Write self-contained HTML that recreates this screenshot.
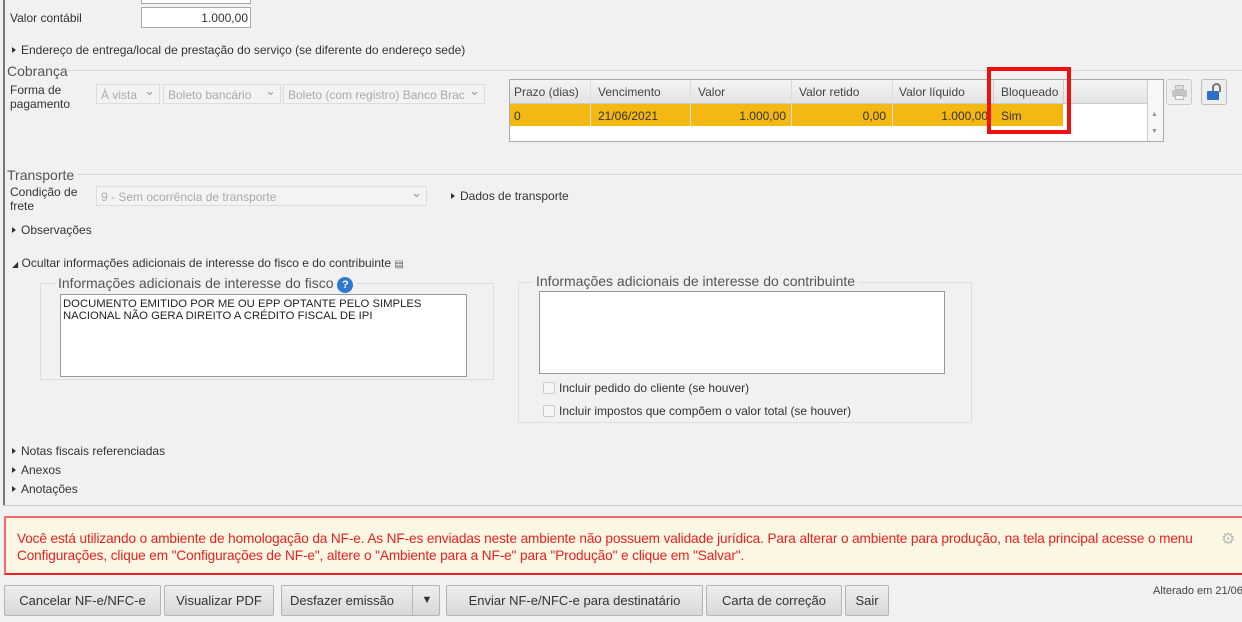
<!DOCTYPE html>
<html><head><meta charset="utf-8"><style>
*{box-sizing:border-box;margin:0;padding:0}
body{width:1242px;height:622px;background:#f1f1f2;font-family:"Liberation Sans",sans-serif;font-size:12px;color:#333;position:relative;overflow:hidden}
.a{position:absolute;white-space:nowrap}
.tri{display:inline-block;width:0;height:0;border-left:4px solid #333;border-top:3.5px solid transparent;border-bottom:3.5px solid transparent;margin-right:5px;vertical-align:1px}
.sel{position:absolute;height:20px;border:1px solid #ddd;background:#f3f3f3;color:#aaa;font-size:12px;padding:3px 4px;overflow:hidden}
.sel:after{content:"⌄";position:absolute;right:4px;top:-2px;font-size:13px;color:#999}
.hl{position:absolute;height:1px;background:#d6d6d6}
.leg{font-size:14px;color:#555}
.btn{position:absolute;top:585px;height:31px;border:1px solid #b5b5b5;border-radius:2px;background:linear-gradient(#eee,#d8d8d8);font-size:13px;color:#333;text-align:center;line-height:29px}
.cb{display:inline-block;width:12px;height:12px;border:1px solid #ccc;border-radius:2px;background:#f5f5f5;vertical-align:-2px;margin-right:4px}
</style></head><body>
<div class="a" style="left:3px;top:0;width:2px;height:506px;background:#777"></div>
<div class="a" style="left:3px;top:505px;width:1239px;height:1px;background:#c8c8c8"></div>
<div class="a" style="left:141px;top:-6px;width:110px;height:10px;border:1px solid #aaa;background:#fff"></div>
<div class="a" style="left:10px;top:11px">Valor contábil</div>
<div class="a" style="left:141px;top:7px;width:110px;height:21px;border:1px solid #aaa;background:#fff;text-align:right;padding:3px 2px;font-size:12px">1.000,00</div>
<div class="a" style="left:12px;top:43px"><span class="tri"></span>Endereço de entrega/local de prestação do serviço (se diferente do endereço sede)</div>
<div class="a leg" style="left:7px;top:63px">Cobrança</div>
<div class="hl" style="left:66px;top:70px;width:1180px"></div>
<div class="a" style="left:10px;top:83px;line-height:14px">Forma de<br>pagamento</div>
<div class="sel" style="left:96px;top:84px;width:64px">À vista</div>
<div class="sel" style="left:163px;top:84px;width:118px">Boleto bancário</div>
<div class="sel" style="left:283px;top:84px;width:202px">Boleto (com registro) Banco Brac</div>
<div class="a" style="left:509px;top:79px;width:655px;height:63px;border:1px solid #aaa;background:#fff"></div>
<div class="a" style="left:510px;top:80px;width:653px;height:24px;background:linear-gradient(#f4f4f4,#e3e3e3);border-bottom:1px solid #ccc"></div>
<div class="a" style="left:1147px;top:80px;width:16px;height:61px;border-left:1px solid #ccc;background:#f7f7f7"></div>
<div class="a" style="left:1151px;top:111px;font-size:7px;color:#999">▲</div>
<div class="a" style="left:1151px;top:128px;font-size:7px;color:#999">▼</div>
<div class="a" style="left:510px;top:104px;width:479px;height:22px;background:#f4b813"></div>
<div class="a" style="left:989px;top:104px;width:74px;height:22px;background:#f4b813"></div>
<div class="a" style="left:590px;top:80px;width:1px;height:46px;background:#ddd"></div>
<div class="a" style="left:690px;top:80px;width:1px;height:46px;background:#ddd"></div>
<div class="a" style="left:791px;top:80px;width:1px;height:46px;background:#ddd"></div>
<div class="a" style="left:892px;top:80px;width:1px;height:46px;background:#ddd"></div>
<div class="a" style="left:993px;top:80px;width:1px;height:24px;background:#ccc"></div>
<div class="a" style="left:1063px;top:80px;width:1px;height:24px;background:#ccc"></div>
<div class="a" style="left:514px;top:85px;font-size:12px;color:#444">Prazo (dias)</div>
<div class="a" style="left:598px;top:85px;font-size:12px;color:#444">Vencimento</div>
<div class="a" style="left:698px;top:85px;font-size:12px;color:#444">Valor</div>
<div class="a" style="left:799px;top:85px;font-size:12px;color:#444">Valor retido</div>
<div class="a" style="left:899px;top:85px;font-size:12px;color:#444">Valor líquido</div>
<div class="a" style="left:1001px;top:85px;font-size:12px;color:#444">Bloqueado</div>
<div class="a" style="left:514px;top:109px;font-size:12px">0</div>
<div class="a" style="left:598px;top:109px;font-size:12px">21/06/2021</div>
<div class="a" style="left:690px;top:109px;width:96px;text-align:right;font-size:12px">1.000,00</div>
<div class="a" style="left:791px;top:109px;width:95px;text-align:right;font-size:12px">0,00</div>
<div class="a" style="left:892px;top:109px;width:96px;text-align:right;font-size:12px">1.000,00</div>
<div class="a" style="left:1001px;top:109px;font-size:12px">Sim</div>
<div class="a" style="left:987px;top:67px;width:84px;height:67px;border:4px solid #f01010"></div>
<div class="a" style="left:1166px;top:79px;width:26px;height:26px;border:1px solid #ccc;border-radius:3px;background:#eee">
<div style="position:absolute;left:8px;top:5px;width:9px;height:5px;background:#ddd;border:1px solid #bbb"></div>
<div style="position:absolute;left:5px;top:10px;width:15px;height:7px;background:#c4c4c4;border-radius:1px"></div>
<div style="position:absolute;left:8px;top:15px;width:9px;height:5px;background:#f4f4f4;border:1px solid #bbb"></div></div>
<div class="a" style="left:1201px;top:79px;width:26px;height:26px;border:1px solid #bbb;border-radius:3px;background:#eee"><div style="position:absolute;left:10px;top:3px;width:9px;height:9px;border:2px solid #777;border-bottom:none;border-radius:5px 5px 0 0"></div><div style="position:absolute;left:5px;top:11px;width:12px;height:9px;background:#2d6fc4;border-radius:1px"></div></div>
<div class="a leg" style="left:7px;top:167px">Transporte</div>
<div class="hl" style="left:78px;top:174px;width:1167px"></div>
<div class="a" style="left:10px;top:185px;line-height:14px">Condição de<br>frete</div>
<div class="sel" style="left:96px;top:186px;width:331px">9 - Sem ocorrência de transporte</div>
<div class="a" style="left:451px;top:189px"><span class="tri"></span>Dados de transporte</div>
<div class="a" style="left:12px;top:223px"><span class="tri"></span>Observações</div>
<div class="a" style="left:12px;top:256px"><span style="font-size:8px">◢</span> Ocultar informações adicionais de interesse do fisco e do contribuinte <span style="font-size:10px;color:#666">▤</span></div>
<div class="a" style="left:40px;top:283px;width:454px;height:97px;border:1px solid #ddd"></div>
<div class="a leg" style="left:55px;top:275px;background:#f1f1f2;padding:0 3px">Informações adicionais de interesse do fisco <span style="display:inline-block;width:16px;height:16px;border-radius:50%;background:#2f7ad0;color:#fff;font-size:11px;font-weight:bold;text-align:center;line-height:16px">?</span></div>
<div class="a" style="left:60px;top:294px;width:407px;height:83px;border:1px solid #999;background:#fff;padding:3px 2px;font-size:11.3px;line-height:12px;color:#222">DOCUMENTO EMITIDO POR ME OU EPP OPTANTE PELO SIMPLES<br>NACIONAL NÃO GERA DIREITO A CRÉDITO FISCAL DE IPI</div>
<div class="a" style="left:518px;top:282px;width:454px;height:141px;border:1px solid #ddd"></div>
<div class="a leg" style="left:533px;top:273px;background:#f1f1f2;padding:0 3px">Informações adicionais de interesse do contribuinte</div>
<div class="a" style="left:539px;top:291px;width:406px;height:83px;border:1px solid #999;background:#fff"></div>
<div class="a" style="left:543px;top:381px"><span class="cb"></span>Incluir pedido do cliente (se houver)</div>
<div class="a" style="left:543px;top:404px"><span class="cb"></span>Incluir impostos que compõem o valor total (se houver)</div>
<div class="a" style="left:12px;top:444px"><span class="tri"></span>Notas fiscais referenciadas</div>
<div class="a" style="left:12px;top:463px"><span class="tri"></span>Anexos</div>
<div class="a" style="left:12px;top:482px"><span class="tri"></span>Anotações</div>
<div class="a" style="left:4px;top:516px;width:1250px;height:59px;border:2px solid #f26a6a;border-bottom-color:#f02020;background:#fbf7e3"></div>
<div class="a" style="left:17px;top:530px;font-size:13.6px;color:#e82020;line-height:17px;letter-spacing:-0.1px">Você está utilizando o ambiente de homologação da NF-e. As NF-es enviadas neste ambiente não possuem validade jurídica. Para alterar o ambiente para produção, na tela principal acesse o menu<br>Configurações, clique em "Configurações de NF-e", altere o "Ambiente para a NF-e" para "Produção" e clique em "Salvar".</div>
<div class="a" style="left:1221px;top:529px;font-size:16px;color:#bbb">⚙</div>
<div class="btn" style="left:4px;width:157px">Cancelar NF-e/NFC-e</div>
<div class="btn" style="left:164px;width:110px">Visualizar PDF</div>
<div class="btn" style="left:281px;width:159px;text-align:left;padding-left:8px">Desfazer emissão<span style="position:absolute;left:130px;top:0;height:29px;border-left:1px solid #b5b5b5;width:29px;text-align:center;font-size:11px">▼</span></div>
<div class="btn" style="left:446px;width:257px">Enviar NF-e/NFC-e para destinatário</div>
<div class="btn" style="left:706px;width:136px">Carta de correção</div>
<div class="btn" style="left:845px;width:44px">Sair</div>
<div class="a" style="left:1153px;top:585px;font-size:11px;color:#444">Alterado em 21/06</div>
</body></html>
